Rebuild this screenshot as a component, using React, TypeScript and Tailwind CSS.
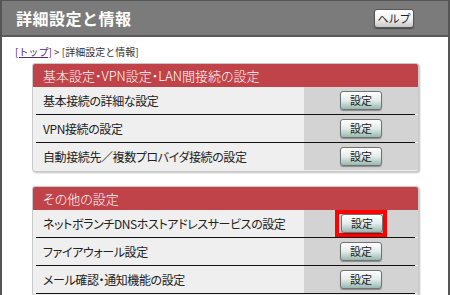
import React from 'react';

const font = "font-['MS_PGothic','Noto_Sans_CJK_JP',sans-serif]";

type Item = { label: string; highlight?: boolean };

const sections: { title: string; items: Item[]; more?: boolean }[] = [
  {
    title: '基本設定・VPN設定・LAN間接続の設定',
    items: [
      { label: '基本接続の詳細な設定' },
      { label: 'VPN接続の設定' },
      { label: '自動接続先／複数プロバイダ接続の設定' },
    ],
  },
  {
    title: 'その他の設定',
    more: true,
    items: [
      { label: 'ネットボランチDNSホストアドレスサービスの設定', highlight: true },
      { label: 'ファイアウォール設定' },
      { label: 'メール確認・通知機能の設定' },
    ],
  },
];

function SetButton() {
  return (
    <button className="w-[42px] h-[19px] rounded-[3px] border border-[#6f7473] bg-gradient-to-b from-[#ffffff] via-[#e2ecea] to-[#98b8b2] text-[11px] leading-none text-[#222] shadow-[0_1px_1px_rgba(0,0,0,0.35)]">
      設定
    </button>
  );
}

function Row({ item, line }: { item: Item; line: boolean }) {
  return (
    <div>
      <div className="flex h-[27px]">
        <div className="flex-1 flex items-center pl-[10px] bg-[#efefef] text-[12px] text-[#222] [font-feature-settings:'palt'] tracking-[-0.4px]">
          {item.label}
        </div>
        <div className="w-[114px] flex items-center justify-center bg-[#d3d3d3]">
          {item.highlight ? (
            <div className="h-[27px] flex items-center border-4 border-[#ff0000] pl-[2px]">
              <SetButton />
            </div>
          ) : (
            <SetButton />
          )}
        </div>
      </div>
      {line && <div className="h-px mx-[3px] bg-[#111]" />}
    </div>
  );
}

export default function App() {
  return (
    <div className={`w-[450px] h-[295px] overflow-hidden bg-white border-x-2 border-t border-[#555] ${font}`}>
      <div className="h-[36px] bg-[#7b7b7b] border-b-2 border-[#5a5a5a] flex items-center justify-between pl-[14px] pr-[34px]">
        <h1 className="text-white text-[16px] font-bold tracking-[0.5px]">詳細設定と情報</h1>
        <button className="w-[40px] h-[19px] rounded-[3px] border border-[#555] bg-gradient-to-b from-white via-[#f2f2f2] to-[#c8c8c8] text-[11px] leading-none text-[#222] shadow-[0_1px_1px_rgba(0,0,0,0.4)]">
          ヘルプ
        </button>
      </div>

      <div className="pl-[13px] pt-[9px] text-[10px] leading-[12px] text-[#333]">
        <span className="text-[#5b2a6e] underline">[トップ]</span> &gt; [詳細設定と情報]
      </div>

      <div className="pl-[30px] pr-[29px] pt-[5px] flex flex-col gap-[14px]">
        {sections.map((s) => (
          <div
            key={s.title}
            className="rounded-[3px] border border-[#c9c9c9] bg-[#efefef] shadow-[1px_1px_2px_rgba(0,0,0,0.25)] overflow-hidden pb-[1px]"
          >
            <div className="h-[23px] bg-[#c0434a] flex items-center pl-[10px] text-white text-[13px] font-light [font-feature-settings:'palt']">
              {s.title}
            </div>
            {s.items.map((it, i) => (
              <Row key={it.label} item={it} line={i < s.items.length - 1 || !!s.more} />
            ))}
          </div>
        ))}
      </div>
    </div>
  );
}
